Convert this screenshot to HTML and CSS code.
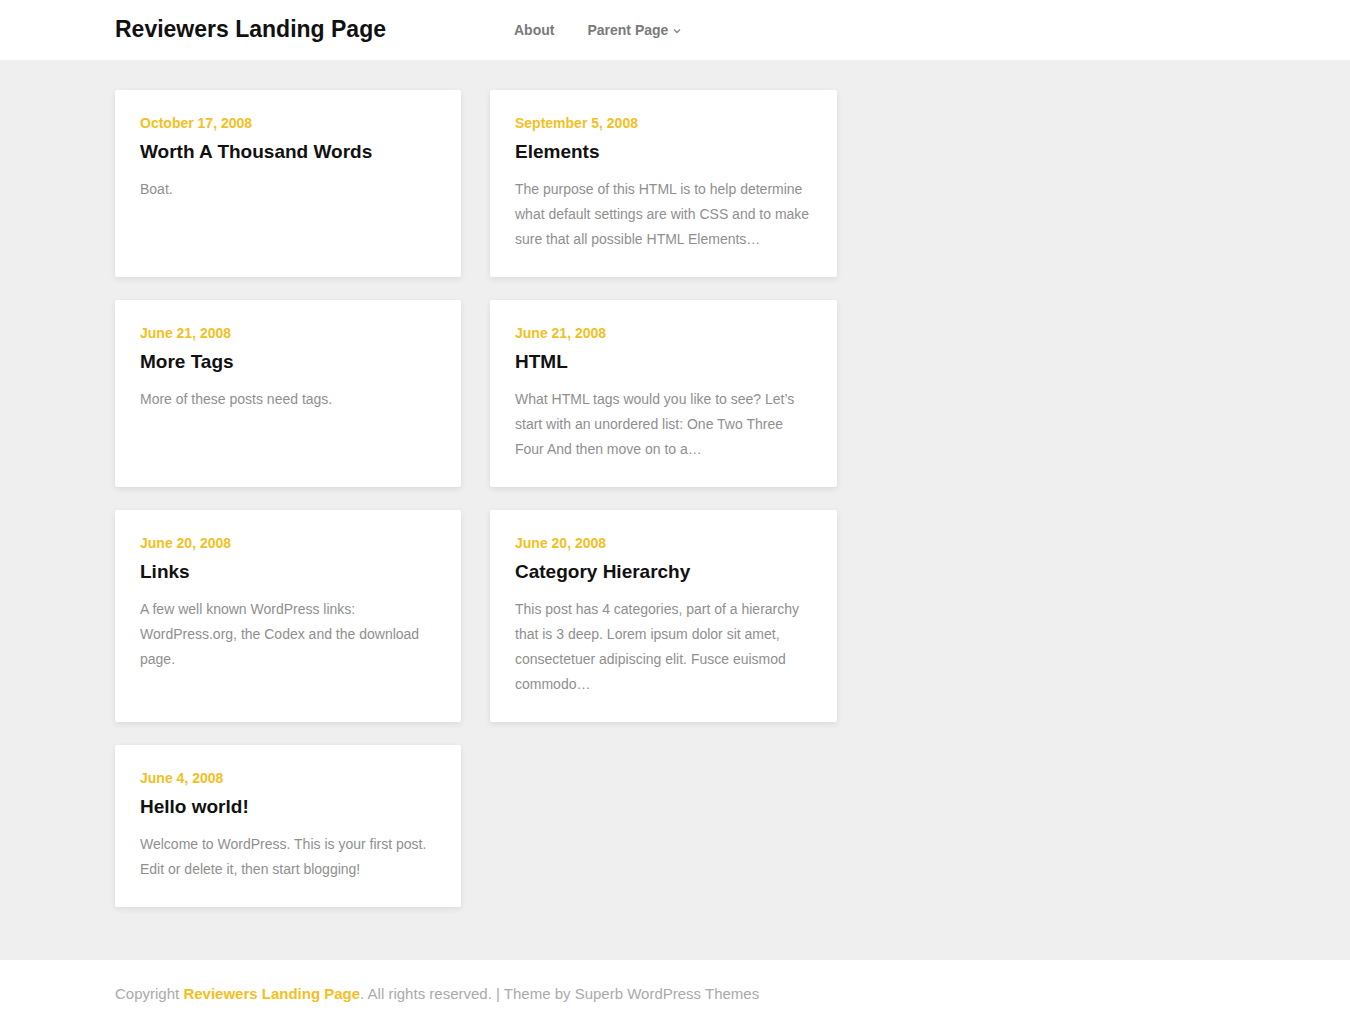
FILE: index.html
```html
<!DOCTYPE html>
<html lang="en">
<head>
<meta charset="utf-8">
<title>Reviewers Landing Page</title>
<link rel="stylesheet" href="styles.css">
</head>
<body>
<header class="site-header">
  <div class="wrap header-inner">
    <a class="site-title" href="#">Reviewers Landing Page</a>
    <nav class="main-nav">
      <a class="nav-link" href="#">About</a>
      <a class="nav-link" href="#">Parent Page <svg class="chev" width="8" height="6" viewBox="0 0 8 6"><path d="M1 1.5 L4 4.5 L7 1.5" fill="none" stroke="#888" stroke-width="1.4"/></svg></a>
    </nav>
  </div>
</header>
<main class="site-main">
  <div class="wrap">
    <div class="posts">
      <article class="card">
        <div class="date">October 17, 2008</div>
        <h2 class="title">Worth A Thousand Words</h2>
        <p class="excerpt">Boat.</p>
      </article>
      <article class="card">
        <div class="date">September 5, 2008</div>
        <h2 class="title">Elements</h2>
        <p class="excerpt">The purpose of this HTML is to help determine what default settings are with CSS and to make sure that all possible HTML Elements…</p>
      </article>
      <article class="card">
        <div class="date">June 21, 2008</div>
        <h2 class="title">More Tags</h2>
        <p class="excerpt">More of these posts need tags.</p>
      </article>
      <article class="card">
        <div class="date">June 21, 2008</div>
        <h2 class="title">HTML</h2>
        <p class="excerpt">What HTML tags would you like to see? Let’s start with an unordered list: One Two Three Four And then move on to a…</p>
      </article>
      <article class="card">
        <div class="date">June 20, 2008</div>
        <h2 class="title">Links</h2>
        <p class="excerpt">A few well known WordPress links: WordPress.org, the Codex and the download page.</p>
      </article>
      <article class="card">
        <div class="date">June 20, 2008</div>
        <h2 class="title">Category Hierarchy</h2>
        <p class="excerpt">This post has 4 categories, part of a hierarchy that is 3 deep. Lorem ipsum dolor sit amet, consectetuer adipiscing elit. Fusce euismod commodo…</p>
      </article>
      <article class="card">
        <div class="date">June 4, 2008</div>
        <h2 class="title">Hello world!</h2>
        <p class="excerpt">Welcome to WordPress. This is your first post. Edit or delete it, then start blogging!</p>
      </article>
    </div>
  </div>
</main>
<footer class="site-footer">
  <div class="wrap">
    <p class="copy">Copyright <a class="footer-link" href="#">Reviewers Landing Page</a>. All rights reserved. | Theme by Superb WordPress Themes</p>
  </div>
</footer>
</body>
</html>
```
FILE: styles.css
```css
* { box-sizing: border-box; }
html, body { margin: 0; padding: 0; }
html { background: #fff; }
body {
  font-family: "Liberation Sans", Arial, sans-serif;
  background: #efefef;
  color: #333;
}
a { text-decoration: none; }
.wrap {
  width: 1120px;
  margin: 0 auto;
}
.site-header {
  background: #fff;
  height: 60px;
}
.header-inner {
  display: flex;
  align-items: center;
  height: 60px;
}
.site-title {
  font-size: 23px;
  font-weight: bold;
  color: #111;
  line-height: 1;
  margin-top: -1px;
}
.main-nav {
  display: flex;
  align-items: center;
  margin-left: 128px;
  gap: 33px;
}
.nav-link {
  font-size: 14px;
  font-weight: bold;
  color: #7a7a7a;
  display: flex;
  align-items: center;
  gap: 5px;
}
.chev { display: block; margin-top: 1px; }
.site-main {
  padding: 30px 0 53px;
}
.posts {
  display: grid;
  grid-template-columns: 346px 347px;
  column-gap: 29px;
  row-gap: 23px;
  align-items: stretch;
}
.card {
  background: #fff;
  border-radius: 2px;
  box-shadow: 0 2px 6px rgba(0,0,0,0.09);
  padding: 25px 25px 25px;
}
.date {
  font-size: 14px;
  font-weight: bold;
  line-height: 17px;
  color: #f3bf22;
}
.title {
  margin: 8px 0 0;
  font-size: 19px;
  font-weight: bold;
  line-height: 24px;
  color: #111;
}
.excerpt {
  margin: 13px 0 0;
  font-size: 14px;
  line-height: 25px;
  color: #8f8f8f;
}
.site-footer {
  background: #fff;
  height: 67px;
  display: flex;
  align-items: center;
}
.copy {
  margin: 0;
  font-size: 15px;
  color: #aaa;
  line-height: 20px;
}
.footer-link {
  color: #f3bf22;
  font-weight: bold;
}
```
